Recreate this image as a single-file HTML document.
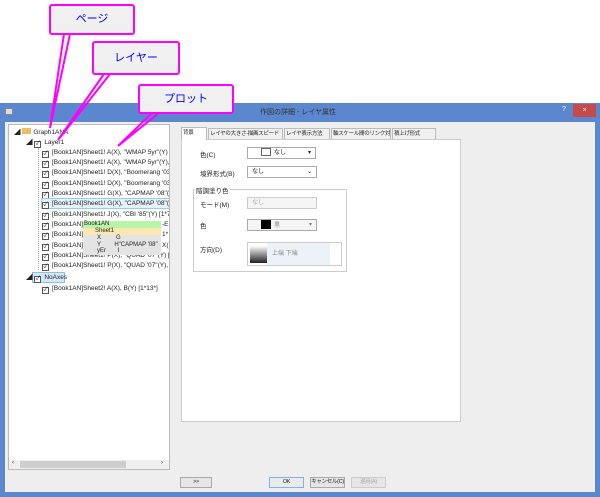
<!DOCTYPE html>
<html><head><meta charset="utf-8"><style>
*{margin:0;padding:0;box-sizing:border-box}
body{width:600px;height:497px;background:#fff;position:relative;overflow:hidden;font-family:"Liberation Sans","Noto Sans CJK JP",sans-serif;font-size:7px;color:#222}
.a{position:absolute}
.win{left:0;top:103px;width:600px;height:394px;background:#5b87cf}
.body{left:5px;top:122px;width:590px;height:370px;background:#eeeeee}
.tree{left:8px;top:124px;width:162px;height:346px;background:#fff;border:1px solid #bbb;overflow:hidden}
.row{position:absolute;white-space:nowrap;font-size:6.5px;line-height:9px}
.cb{display:inline-block;width:7px;height:7px;border:1px solid #555;vertical-align:-1px;margin-right:3px;font-size:6px;line-height:5px;text-align:center;background:#fff}
.callout{background:#f0f0f0;border:2px solid #f0f;border-radius:3px;color:#00f;font-size:11px;text-align:center}
.tab{position:absolute;top:128px;height:11px;border:1px solid #bbb;border-bottom:none;background:#f0f0f0;font-size:5.5px;line-height:10px;padding:0 1px;white-space:nowrap;overflow:hidden;letter-spacing:-0.3px}
.panel{left:181px;top:139px;width:280px;height:283px;background:#fff;border:1px solid #ccc}
.lbl{position:absolute;font-size:6.5px}
.dd{position:absolute;height:12px;border:1px solid #aaa;background:#f5f5f5;font-size:6px;line-height:10px;padding-left:4px}
.btn{position:absolute;top:477px;height:11px;border:1px solid #aaa;background:#e6e6e6;font-size:5.5px;line-height:9px;text-align:center;white-space:nowrap;overflow:hidden;letter-spacing:-0.3px}
</style></head><body>
<div class="a win"></div>
<div class="a" style="left:5px;top:108px;width:8px;height:7px;background:#ddd;border:1px solid #888"></div>
<div class="a" style="left:260px;top:107px;color:#333;font-size:7px">作図の詳細 - レイヤ属性</div>
<div class="a" style="left:562px;top:106px;color:#fff;font-size:7px">?</div>
<div class="a" style="left:573px;top:104px;width:23px;height:13px;background:#c74a4a;color:#fff;font-size:7px;text-align:center;line-height:13px">×</div>
<div class="a body"></div>
<div class="a tree">
<div class="row" style="left:5px;top:3px">◢ <span style="display:inline-block;width:9px;height:6px;background:#e8c060;margin-right:2px"></span>Graph1ANA</div>
<div class="row" style="left:17px;top:13px">◢ <span class="cb">✓</span>Layer1</div>
<div class="a" style="left:29px;top:23px;width:1px;height:122px;border-left:1px dotted #aaa"></div>
<div class="row" style="left:33px;top:23px"><span class="cb">✓</span>[Book1AN]Sheet1! A(X), "WMAP 5yr"(Y) [</div>
<div class="row" style="left:33px;top:33px"><span class="cb">✓</span>[Book1AN]Sheet1! A(X), "WMAP 5yr"(Y), C</div>
<div class="row" style="left:33px;top:43px"><span class="cb">✓</span>[Book1AN]Sheet1! D(X), "Boomerang '03"(</div>
<div class="row" style="left:33px;top:54px"><span class="cb">✓</span>[Book1AN]Sheet1! D(X), "Boomerang '03"(</div>
<div class="row" style="left:33px;top:64px"><span class="cb">✓</span>[Book1AN]Sheet1! G(X), "CAPMAP '08"(Y(</div>
<div class="a" style="left:32px;top:73px;width:130px;height:11px;background:#e5f1fb;border:1px solid #9cc8ea"></div>
<div class="row" style="left:33px;top:74px"><span class="cb">✓</span>[Book1AN]Sheet1! G(X), "CAPMAP '08"(Y),</div>
<div class="row" style="left:33px;top:85px"><span class="cb">✓</span>[Book1AN]Sheet1! J(X), "CBI '85"(Y) [1*7</div>
<div class="row" style="left:33px;top:95px"><span class="cb">✓</span>[Book1AN]</div>
<div class="row" style="left:33px;top:105px"><span class="cb">✓</span>[Book1AN]</div>
<div class="row" style="left:33px;top:116px"><span class="cb">✓</span>[Book1AN]</div>
<div class="row" style="left:33px;top:126px"><span class="cb">✓</span>[Book1AN]Sheet1! P(X), "QUAD '07"(Y) [1</div>
<div class="row" style="left:33px;top:136px"><span class="cb">✓</span>[Book1AN]Sheet1! P(X), "QUAD '07"(Y), R</div>
<div class="a" style="left:74px;top:96px;width:78px;height:7px;background:#b8f5a8;font-size:6px;line-height:7px;padding-left:1px">Book1AN</div>
<div class="a" style="left:74px;top:103px;width:78px;height:7px;background:#fbe8b0;font-size:6px;line-height:7px;padding-left:12px">Sheet1</div>
<div class="a" style="left:74px;top:110px;width:78px;height:20px;background:#e4e4e4;font-size:6px;line-height:6.5px;padding-left:14px">X&nbsp;&nbsp;&nbsp;&nbsp;&nbsp;&nbsp;&nbsp;&nbsp;&nbsp;G<br>Y&nbsp;&nbsp;&nbsp;&nbsp;&nbsp;&nbsp;&nbsp;&nbsp;H"CAPMAP '08"<br>yEr&nbsp;&nbsp;&nbsp;&nbsp;&nbsp;&nbsp;&nbsp;I</div>
<div class="row" style="left:153px;top:95px">-E</div>
<div class="row" style="left:153px;top:105px">1*</div>
<div class="row" style="left:153px;top:116px">X(</div>
<div class="a" style="left:23px;top:147px;width:33px;height:11px;background:#d5e8f7;border:1px solid #8bbfe6"></div>
<div class="row" style="left:17px;top:148px">◢ <span class="cb">✓</span>NoAxes</div>
<div class="row" style="left:33px;top:159px"><span class="cb">✓</span>[Book1AN]Sheet2! A(X), B(Y) [1*13*]</div>
<div class="a" style="left:0;top:335px;width:160px;height:9px;background:#f0f0f0"></div>
<div class="a" style="left:11px;top:336px;width:106px;height:7px;background:#cdcdcd"></div>
<div class="a" style="left:3px;top:335px;font-size:6px">‹</div>
<div class="a" style="left:152px;top:335px;font-size:6px">›</div>
</div>
<svg class="a" style="left:0;top:0" width="600" height="160">
<g stroke="#f0f" stroke-width="2" fill="none">
<polyline points="64,34 50,128 70,34"/>
<polyline points="110,74 58,140 104,74"/>
<polyline points="160,112 118,146 153,112"/>
</g></svg>
<div class="a callout" style="left:49px;top:4px;width:86px;height:31px;line-height:27px">ページ</div>
<div class="a callout" style="left:92px;top:41px;width:88px;height:34px;line-height:30px">レイヤー</div>
<div class="a callout" style="left:138px;top:84px;width:96px;height:30px;line-height:26px">プロット</div>
<div class="a panel"></div>
<div class="tab" style="left:181px;top:127px;height:13px;background:#fff;width:26px">背景</div>
<div class="tab" style="left:208px;width:75px">レイヤの大きさ-描画スピード</div>
<div class="tab" style="left:284px;width:46px">レイヤ表示方法</div>
<div class="tab" style="left:331px;width:60px">軸スケール間のリンク対応</div>
<div class="tab" style="left:392px;width:44px">積上げ形式</div>
<div class="lbl" style="left:200px;top:149px">色(C)</div>
<div class="dd" style="left:247px;top:147px;width:69px;background:#fff"><span style="display:inline-block;width:10px;height:8px;border:1px solid #666;vertical-align:-2px;margin:0 3px 0 9px"></span>なし<span style="position:absolute;right:4px">▾</span></div>
<div class="lbl" style="left:200px;top:168px">境界形式(B)</div>
<div class="dd" style="left:247px;top:166px;width:70px;background:#fff">なし<span style="position:absolute;right:4px">⌄</span></div>
<div class="a" style="left:193px;top:189px;width:154px;height:83px;border:1px solid #ccc"></div>
<div class="lbl" style="left:195px;top:185px;background:#fff;padding:0 1px">階調塗り色</div>
<div class="lbl" style="left:200px;top:199px">モード(M)</div>
<div class="dd" style="left:247px;top:197px;width:70px;color:#aaa;border-color:#ccc">なし</div>
<div class="lbl" style="left:200px;top:220px">色</div>
<div class="dd" style="left:247px;top:219px;width:70px"><span style="display:inline-block;width:10px;height:9px;background:#000;vertical-align:-2px;margin:0 3px 0 9px"></span><span style="color:#888">黒</span><span style="position:absolute;right:4px;color:#888">▾</span></div>
<div class="lbl" style="left:200px;top:244px">方向(D)</div>
<div class="dd" style="left:247px;top:242px;width:95px;height:24px;background:#fff;border-color:#ccc"><span style="position:absolute;left:2px;top:3px;width:17px;height:17px;background:linear-gradient(#fff,#222)"></span><span style="position:absolute;left:19px;top:0;width:63px;height:22px;background:#edf2f8;color:#888;line-height:22px;padding-left:5px">上端 下端</span></div>
<div class="btn" style="left:180px;width:32px">&gt;&gt;</div>
<div class="btn" style="left:269px;width:35px;border-color:#7ab4ea;background:#eaeaea">OK</div>
<div class="btn" style="left:310px;width:35px">キャンセル(C)</div>
<div class="btn" style="left:351px;width:35px;color:#aaa;border-color:#ccc">適用(A)</div>
</body></html>
